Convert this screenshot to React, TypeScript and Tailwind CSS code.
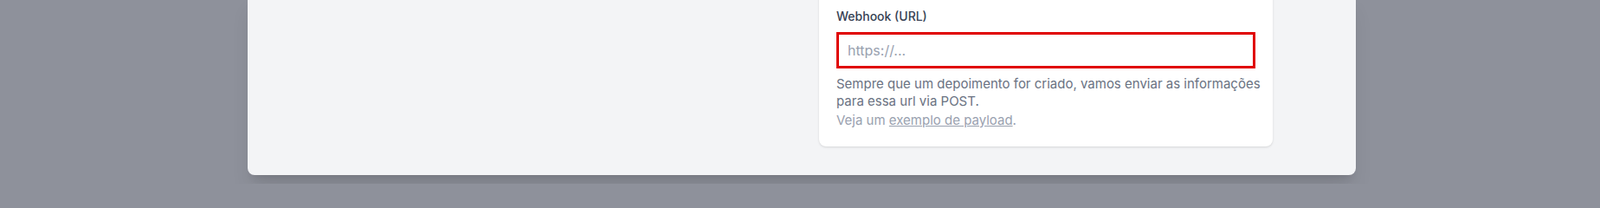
export default function App() {
  return (
    <div className="min-h-screen bg-[#8e919b]">
      <div
        className="flex h-[212px] flex-col justify-end overflow-hidden pb-[10px] pl-1"
        style={{ fontFamily: "Inter, 'Noto Sans', sans-serif" }}
      >
        <div className="mx-auto w-[1280px] shrink-0 rounded-b-lg bg-gray-100 px-24 pb-[33px] shadow-xl">
          <div className="grid grid-cols-2 gap-10">
            <div />
            <div className="rounded-lg bg-white p-5 shadow-sm">
              <label htmlFor="webhook" className="block text-sm leading-5 font-medium text-gray-700">
                Webhook (URL)
              </label>
              <input
                id="webhook"
                type="text"
                placeholder="https://..."
                className="mt-2 block w-full border-[3px] border-[#e00000] bg-white px-2.5 py-1.5 text-base leading-6 text-gray-900 placeholder:text-gray-400 focus:outline-none"
              />
              <p className="mt-2 -mr-2 text-[15px] leading-5 text-gray-500">
                Sempre que um depoimento for criado, vamos enviar as informações para essa url via POST.
              </p>
              <p className="mt-0.5 text-[15px] leading-5 text-gray-400">
                Veja um{" "}
                <a href="#" className="underline">
                  exemplo de payload
                </a>
                .
              </p>
            </div>
          </div>
        </div>
      </div>
    </div>
  );
}
